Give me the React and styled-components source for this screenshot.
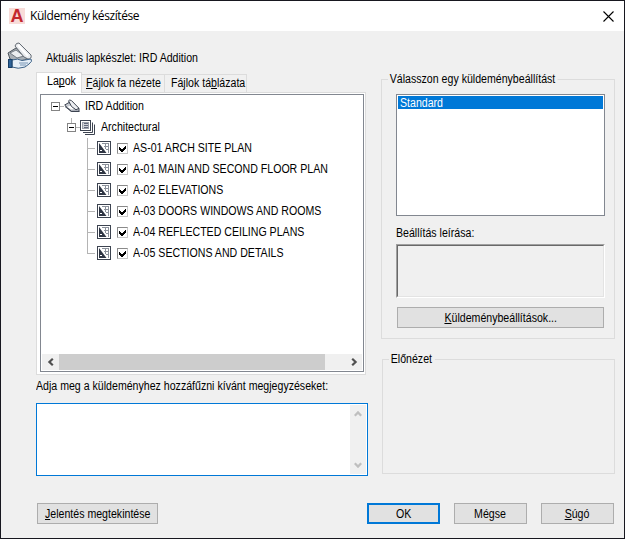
import React, { useState } from "react";
import styled, { createGlobalStyle } from "styled-components";

const sheets = [
  { id: 1, name: "AS-01 ARCH SITE PLAN" },
  { id: 2, name: "A-01 MAIN AND SECOND FLOOR PLAN" },
  { id: 3, name: "A-02 ELEVATIONS" },
  { id: 4, name: "A-03 DOORS WINDOWS AND ROOMS" },
  { id: 5, name: "A-04 REFLECTED CEILING PLANS" },
  { id: 6, name: "A-05 SECTIONS AND DETAILS" },
];

const TransmittalIcon = () => (
  <svg width="27" height="28" viewBox="0 0 27 28">
    <path d="M1 11 L9 6 L20 14 L19 18 L9 19 L3 17 Z" fill="#aab0b6" stroke="#4c535b" />
    <path d="M3 11 L9 8 L17 14 L10 16 Z" fill="#eceef0" stroke="#6a727a" strokeWidth="0.9" />
    <path d="M8 4 Q9 0.5 12 1 L24 13 Q25 17 21 17 L17 15 Z" fill="#e9ebee" stroke="#666d75" />
    <path d="M11 3 L21 14" stroke="#fff" strokeWidth="2" />
    <path d="M5 18 Q11 16 15 18.5 L24 17 Q26 19 22 22 L18 25 Q11 27.5 5 25 Z" fill="#e6eff8" stroke="#3d6287" />
    <path d="M12 21 H21 M13 23 H19" stroke="#6b8bab" strokeWidth="0.9" />
    <rect x="1.5" y="17.5" width="3.5" height="8" fill="#2e6399" stroke="#173e66" />
  </svg>
);

const SheetSetIcon = () => (
  <svg width="16" height="14" viewBox="0 0 16 14">
    <path d="M0.7 6 L5 3.5 L15 9.5 L15 12.3 L7 12.3 Z" fill="#c6cad1" stroke="#3c4350" />
    <path d="M3 8 L8 6 L11 9 L8 10.5 Z" fill="#fff" />
    <path d="M4.5 1.8 Q5.5 0.3 7.5 1.6 L15 9.3 L12 10.8 L7.5 7.5 Z" fill="#eceef1" stroke="#3c4350" />
    <path d="M1 7.5 L7.5 12.5 H15.5" fill="none" stroke="#3c4350" />
  </svg>
);

const SubsetIcon = () => (
  <svg width="15" height="15" viewBox="0 0 15 15" fill="none" stroke="#3c4350">
    <path d="M12.5 2.5 V12.5 H3" />
    <path d="M14.5 4.5 V14.5 H5" />
    <rect x="0.5" y="0.5" width="10" height="10" fill="#fff" />
    <rect x="2.5" y="2.5" width="6" height="6" fill="#cfd2d8" stroke="#9a9fa9" />
    <path d="M4 3.5 H8 M4 5.5 H8 M4 7.5 H8" stroke="#60677a" />
  </svg>
);

const SheetIcon = () => (
  <svg width="14" height="14" viewBox="0 0 14 14">
    <rect x="0.5" y="0.5" width="13" height="13" fill="#fff" stroke="#3c4350" />
    <path d="M2 2 L9.5 12 H2 Z" fill="#2f3644" />
    <rect x="3" y="9" width="2" height="1" fill="#fff" />
    <path d="M5 2.5 H12 M7 5.5 H12 M9 8.5 H12 M8.5 2 V8 M11.5 2 V12" stroke="#8b919b" fill="none" />
  </svg>
);

const CheckMark = () => (
  <svg width="9" height="9" viewBox="0 0 9 9" shapeRendering="crispEdges">
    <path d="M1 3 V6 L3 8 H4 L8 4 V1 L4 5 H3 Z" fill="#000" />
  </svg>
);

const Chevron = ({ turn, color }) => (
  <svg width="8" height="8" viewBox="0 0 8 8" style={{ transform: `rotate(${turn}deg)` }}>
    <path d="M5.8 0.8 L2.4 4 L5.8 7.2" fill="none" stroke={color} strokeWidth="2.2" />
  </svg>
);

const App = () => {
  const [checked, setChecked] = useState(sheets.map((s) => s.id));
  const toggle = (id) => {
    setChecked(checked.includes(id) ? checked.filter((c) => c !== id) : [...checked, id]);
  };
  return (
    <>
      <GlobalStyle />
      <Window>
        <TitleBar>
          <Logo>A</Logo>
          <Title>Küldemény készítése</Title>
          <Close>
            <svg width="11" height="11" viewBox="0 0 11 11">
              <path d="M0.5 0.5 L10.5 10.5 M10.5 0.5 L0.5 10.5" stroke="#000" strokeWidth="1.1" />
            </svg>
          </Close>
        </TitleBar>
        <Header>
          <TransmittalIcon />
          <Text>Aktuális lapkészlet: IRD Addition</Text>
        </Header>
        <Columns>
          <Left>
            <Tabs>
              <Tab $active $w={46} $pad={10}>
                <Text>La<u>p</u>ok</Text>
              </Tab>
              <Tab $w={83} $pad={4}>
                <Text><u>F</u>ájlok fa nézete</Text>
              </Tab>
              <Tab $w={82} $pad={6}>
                <Text>Fájlok tá<u>b</u>lázata</Text>
              </Tab>
            </Tabs>
            <TabPanel>
              <Tree>
                <Rows>
                  <Row $indent={10}>
                    <Expander />
                    <Dash />
                    <SheetSetIcon />
                    <RowText $gap={5}>IRD Addition</RowText>
                  </Row>
                  <Row $indent={26}>
                    <Expander $stem />
                    <Dash />
                    <SubsetIcon />
                    <RowText $gap={6}>Architectural</RowText>
                  </Row>
                  {sheets.map((item, i) => (
                    <Row $indent={46} key={item.id}>
                      <Branch $last={i === sheets.length - 1} />
                      <SheetIcon />
                      <CheckBox onClick={() => toggle(item.id)}>
                        {checked.includes(item.id) && <CheckMark />}
                      </CheckBox>
                      <RowText $gap={5}>{item.name}</RowText>
                    </Row>
                  ))}
                </Rows>
                <HScroll>
                  <ScrollButton><Chevron turn={0} color="#505050" /></ScrollButton>
                  <Thumb />
                  <ScrollButton><Chevron turn={180} color="#505050" /></ScrollButton>
                </HScroll>
              </Tree>
            </TabPanel>
            <NoteLabel>Adja meg a küldeményhez hozzáfűzni kívánt megjegyzéseket:</NoteLabel>
            <Notes>
              <VScroll>
                <Chevron turn={90} color="#bfbfbf" />
                <Chevron turn={270} color="#bfbfbf" />
              </VScroll>
            </Notes>
          </Left>
          <Right>
            <Group $h={260}>
              <Legend>Válasszon egy küldeménybeállítást</Legend>
              <ListBox>
                <Option><Text>Standard</Text></Option>
              </ListBox>
              <DescLabel>Beállítás leírása:</DescLabel>
              <Sunken><SunkenInner /></Sunken>
              <SettingsButton>
                <ButtonText><u>K</u>üldeménybeállítások...</ButtonText>
              </SettingsButton>
            </Group>
            <Preview $h={115}>
              <Legend>Előnézet</Legend>
            </Preview>
          </Right>
        </Columns>
        <Footer>
          <Button $w={121}><ButtonText><u>J</u>elentés megtekintése</ButtonText></Button>
          <Actions>
            <Button $w={73} $primary><ButtonText>OK</ButtonText></Button>
            <Button $w={73}><ButtonText>Mégse</ButtonText></Button>
            <Button $w={73}><ButtonText><u>S</u>úgó</ButtonText></Button>
          </Actions>
        </Footer>
      </Window>
    </>
  );
};

export default App;

const GlobalStyle = createGlobalStyle`
  * {
    box-sizing: border-box;
  }
  body {
    margin: 0;
    font-family: "Liberation Sans", Arial, sans-serif;
    font-size: 12px;
    line-height: 14px;
    color: #000;
  }
  svg {
    display: block;
    flex-shrink: 0;
  }
  u {
    text-underline-offset: 1px;
    text-decoration-thickness: 1px;
    text-decoration-skip-ink: none;
  }
`;
const Window = styled.div`
  width: 625px;
  height: 539px;
  display: flex;
  flex-direction: column;
  background-color: #f0f0f0;
  border: 1px solid #17171f;
  overflow: hidden;
`;
const TitleBar = styled.div`
  height: 30px;
  padding: 0 10px 0 8px;
  display: flex;
  align-items: center;
  background-color: #fff;
`;
const Logo = styled.div`
  width: 16px;
  height: 16px;
  display: flex;
  align-items: center;
  justify-content: center;
  background-color: #f8dcd9;
  color: #c3272f;
  font-size: 18px;
  font-weight: 700;
`;
const Title = styled.div`
  margin-left: 5px;
  font-family: "Open Sans", sans-serif;
  font-size: 12px;
  letter-spacing: -0.42px;
`;
const Close = styled.div`
  margin-left: auto;
`;
/* the dialog font is a narrow cut of the sans face */
const Text = styled.span`
  display: inline-block;
  flex-shrink: 0;
  white-space: nowrap;
  transform: scaleX(0.883);
  transform-origin: left center;
`;
const ButtonText = styled(Text)`
  transform-origin: center;
`;
const Header = styled.div`
  height: 41px;
  padding: 11px 0 0 6px;
  display: flex;
  gap: 12px;
  ${Text} {
    padding-top: 9px;
  }
`;
const Columns = styled.div`
  display: flex;
  padding-left: 35px;
`;
const Left = styled.div`
  width: 332px;
  display: flex;
  flex-direction: column;
`;
const Tabs = styled.div`
  height: 20px;
  display: flex;
  align-items: flex-end;
`;
const Tab = styled.div`
  width: ${(props) => props.$w}px;
  height: ${(props) => (props.$active ? 21 : 18)}px;
  margin-bottom: ${(props) => (props.$active ? -1 : 0)}px;
  padding-top: 1px;
  padding-left: ${(props) => props.$pad}px;
  background-color: ${(props) => (props.$active ? "#fff" : "#f0f0f0")};
  border: 1px solid #dcdcdc;
  border-bottom: none;
  border-left-width: ${(props) => (props.$active ? 1 : 0)}px;
  z-index: ${(props) => (props.$active ? 1 : 0)};
`;
const TabPanel = styled.div`
  width: 330px;
  height: 283px;
  padding: 1px 1px 2px 3px;
  display: flex;
  background-color: #fff;
  border: 1px solid #dcdcdc;
`;
const Tree = styled.div`
  width: 324px;
  height: 278px;
  padding: 1px;
  display: flex;
  flex-direction: column;
  justify-content: space-between;
  background-color: #fff;
  border: 1px solid #828790;
`;
const Rows = styled.div`
  display: flex;
  flex-direction: column;
`;
const Row = styled.div`
  height: 21px;
  padding-left: ${(props) => props.$indent - 1}px;
  display: flex;
  align-items: center;
  > svg {
    margin-bottom: 1px;
  }
`;
const RowText = styled(Text)`
  margin-left: ${(props) => props.$gap}px;
  margin-bottom: 1px;
`;
const Expander = styled.div`
  width: 9px;
  height: 9px;
  position: relative;
  background-color: #fff;
  border: 1px solid #848484;
  &::after {
    content: "";
    position: absolute;
    left: 1px;
    top: 3px;
    width: 5px;
    height: 1px;
    background-color: #000;
  }
  &::before {
    content: "";
    position: absolute;
    left: 3px;
    top: -6px;
    width: 1px;
    height: ${(props) => (props.$stem ? 5 : 0)}px;
    background-color: #b4b4b4;
  }
`;
const Dash = styled.div`
  width: 4px;
  height: 1px;
  background-color: #b4b4b4;
`;
const Branch = styled.div`
  width: 10px;
  height: 21px;
  background-image: linear-gradient(#b4b4b4, #b4b4b4), linear-gradient(#b4b4b4, #b4b4b4);
  background-repeat: no-repeat;
  background-size: 1px ${(props) => (props.$last ? 11 : 21)}px, 8px 1px;
  background-position: 0 0, 0 10px;
`;
const CheckBox = styled.div`
  width: 11px;
  height: 11px;
  margin-left: 6px;
  background-color: #fff;
  border: 1px solid #8a8a8a;
  border-right-color: #c8c8c8;
  border-bottom-color: #c8c8c8;
`;
const HScroll = styled.div`
  height: 16px;
  display: flex;
  background-color: #f0f0f0;
`;
const ScrollButton = styled.div`
  width: 17px;
  height: 16px;
  display: flex;
  align-items: center;
  justify-content: center;
`;
const Thumb = styled.div`
  width: 266px;
  margin-right: 20px;
  background-color: #cdcdcd;
`;
const NoteLabel = styled(Text)`
  margin-top: 4px;
`;
const Notes = styled.div`
  width: 332px;
  height: 73px;
  margin-top: 10px;
  padding: 1px;
  display: flex;
  justify-content: flex-end;
  background-color: #fff;
  border: 1px solid #0078d7;
`;
const VScroll = styled.div`
  width: 16px;
  padding: 5px 0;
  display: flex;
  flex-direction: column;
  align-items: center;
  justify-content: space-between;
  background-color: #f0f0f0;
`;
const Right = styled.div`
  margin-left: 13px;
  padding-top: 7px;
  display: flex;
  flex-direction: column;
  align-items: flex-end;
  gap: 20px;
`;
const Group = styled.div`
  width: 234px;
  height: ${(props) => props.$h}px;
  padding: 0 9px 0 14px;
  display: flex;
  flex-direction: column;
  align-items: flex-start;
  border: 1px solid #dcdcdc;
`;
const Preview = styled(Group)`
  width: 233px;
`;
const Legend = styled(Text)`
  margin: -8px 0 0 -8px;
  padding: 0 3px 0 2px;
  background-color: #f0f0f0;
`;
const ListBox = styled.div`
  width: 209px;
  height: 122px;
  margin-top: 8px;
  padding: 1px;
  background-color: #fff;
  border: 1px solid #828790;
`;
const Option = styled.div`
  height: 13px;
  padding-left: 2px;
  display: flex;
  align-items: center;
  color: #fff;
  background-color: #0078d7;
`;
const DescLabel = styled(Text)`
  margin-top: 10px;
`;
const Sunken = styled.div`
  width: 209px;
  height: 54px;
  margin-top: 4px;
  border: 1px solid;
  border-color: #a0a0a0 #fff #fff #a0a0a0;
`;
const SunkenInner = styled.div`
  height: 100%;
  border: 1px solid;
  border-color: #696969 #e3e3e3 #e3e3e3 #696969;
`;
const Button = styled.button`
  width: ${(props) => props.$w}px;
  height: 21px;
  padding: 0;
  display: flex;
  align-items: center;
  justify-content: center;
  font: inherit;
  color: #000;
  background-color: #e1e1e1;
  border: ${(props) => (props.$primary ? "2px solid #0078d7" : "1px solid #adadad")};
`;
const SettingsButton = styled(Button)`
  width: 207px;
  margin: 9px 0 0 1px;
`;
const Footer = styled.div`
  margin-top: 27px;
  padding: 0 10px 0 36px;
  display: flex;
  justify-content: space-between;
`;
const Actions = styled.div`
  display: flex;
  gap: 14px;
`;
